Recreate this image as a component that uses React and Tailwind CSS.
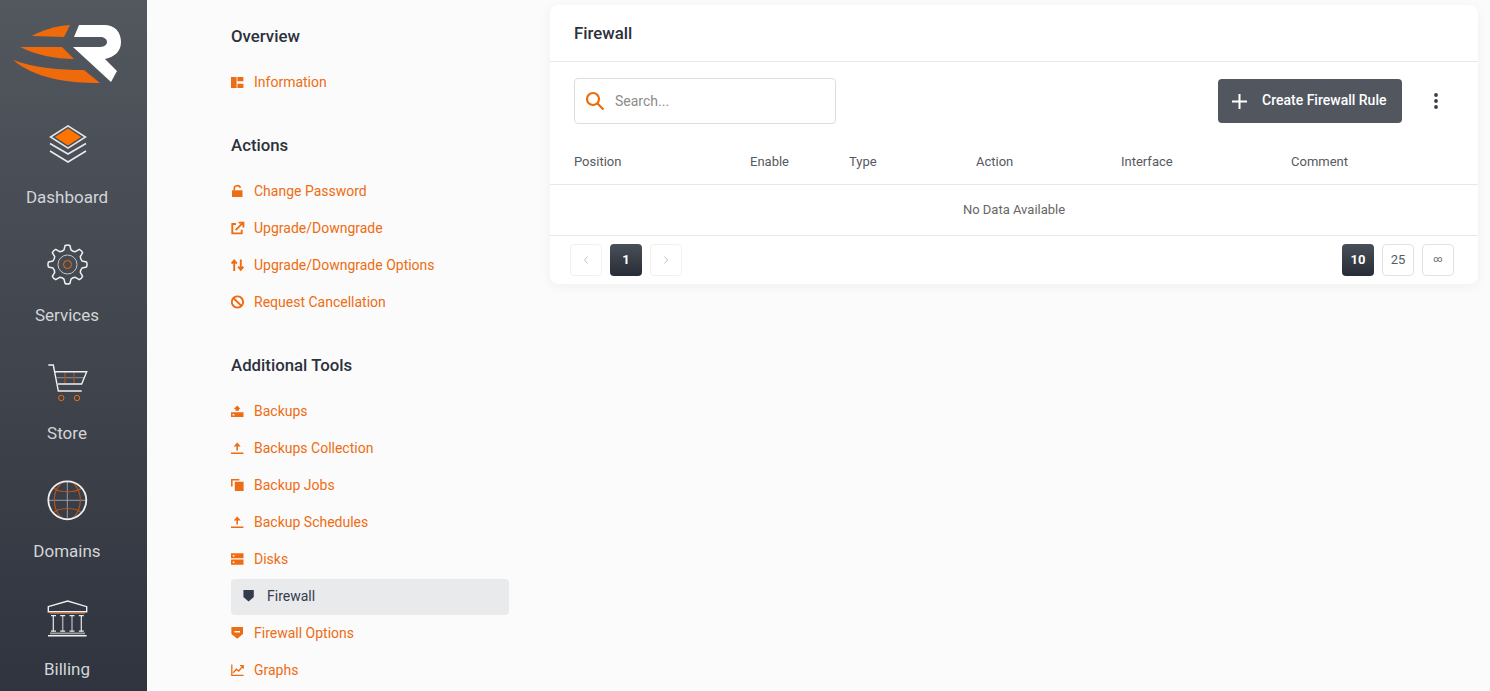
const gearPath = (() => {
  // Eight-toothed cog outline around the origin of its own viewBox.
  const cx = 25.5, cy = 24.5, teeth = 8, out = 19.2, inn = 15;
  let d = "";
  for (let i = 0; i < teeth; i++) {
    const a = (i / teeth) * Math.PI * 2 - Math.PI / 2;
    const step = (Math.PI * 2) / teeth;
    const pt = (r, t) => `${(cx + r * Math.cos(t)).toFixed(2)} ${(cy + r * Math.sin(t)).toFixed(2)}`;
    d += `${i === 0 ? "M" : "L"}${pt(inn, a - step * 0.3)} L${pt(out, a - step * 0.16)} Q${pt(out + 0.8, a)} ${pt(out, a + step * 0.16)} L${pt(inn, a + step * 0.3)} Q${pt(inn - 1, a + step * 0.5)} `;
    const n = a + step;
    d += `${pt(inn, n - step * 0.3)} `;
  }
  return d + "Z";
})();

function Logo() {
  return (
    <svg viewBox="0 0 147 100" className="w-[147px] h-[100px] block">
      <path fill="#ee6a0a" d="M32 36C42 30 56 26 70 25L64 37Z" />
      <path fill="#ee6a0a" d="M20 47H62L74 59C55 59 36 55 20 47Z" />
      <path fill="#ee6a0a" d="M13 60C35 68 60 70 84 70L100 83C65 83 35 78 13 60Z" />
      <path fill="#ffffff" d="M79 25H104C115 25 121 32 121 42C121 51 115 57 105 59L117 71L111 82L73 47H100C105 47 107 44 107 42C107 39 104 37 100 37H74Z" />
    </svg>
  );
}

const sideIcons = {
  dashboard: (
    <>
      <path d="M26 3.8L43.5 15L26 26.2L8.5 15Z" fill="none" stroke="#e8e9ea" strokeWidth="1.5" />
      <path d="M26 6.6L39 15L26 23.4L13 15Z" fill="#ff7300" />
      <path d="M8 21.5L26 32L44 21.5M8 29L26 40L44 29" fill="none" stroke="#e8e9ea" strokeWidth="1.6" />
    </>
  ),
  services: (
    <>
      <path d={gearPath} fill="none" stroke="#f0f0f0" strokeWidth="1.5" strokeLinejoin="round" />
      <circle cx="25.5" cy="24.5" r="9.5" fill="none" stroke="#c4c6ca" strokeWidth="1" />
      <circle cx="25.5" cy="24.5" r="4" fill="none" stroke="#ee6a0a" strokeWidth="1" />
    </>
  ),
  store: (
    <>
      <path d="M14.7 19.7H42" stroke="#8e9096" strokeWidth="1" fill="none" />
      <path d="M23 14V26M32 14V26" stroke="#a5562a" strokeWidth="1.2" fill="none" />
      <path d="M6.3 7H11.3L16.3 33H39.7M13 13.7H44.7L39.7 26H16" stroke="#f0f0f0" strokeWidth="1.4" fill="none" />
      <circle cx="19.3" cy="40" r="2.7" fill="none" stroke="#ee6a0a" strokeWidth="1" />
      <circle cx="35" cy="40" r="2.7" fill="none" stroke="#ee6a0a" strokeWidth="1" />
    </>
  ),
  domains: (
    <>
      <path d="M25.3 5.5V43M6 24.3H44.5" stroke="#9a9ca2" strokeWidth="1" fill="none" />
      <ellipse cx="25.3" cy="24.3" rx="13" ry="19" fill="none" stroke="#b8541a" strokeWidth="1.1" />
      <path d="M11 12C18 17 33 17 40 12M11 37C18 31 33 31 40 37" fill="none" stroke="#b8541a" strokeWidth="1.1" />
      <circle cx="25.3" cy="24.3" r="19" fill="none" stroke="#f0f0f0" strokeWidth="1.8" />
    </>
  ),
  billing: (
    <>
      <path d="M6.3 12.7L25.7 7L44.7 12.7V17.7H6.3Z" fill="none" stroke="#f0f0f0" strokeWidth="1.4" />
      <path d="M8 19.5H43" stroke="#c05f1c" strokeWidth="1" />
      <path d="M11.3 21V37.5M39.3 21V37.5" stroke="#e8e9ea" strokeWidth="1.2" />
      <path d="M20.7 21V37.5M30 21V37.5" stroke="#a4a6aa" strokeWidth="1.5" />
      <path d="M9 21.7H14M18.2 21.7H23.2M27.5 21.7H32.5M36.8 21.7H41.8M9 37.2H14M18.2 37.2H23.2M27.5 37.2H32.5M36.8 37.2H41.8" stroke="#e8e9ea" strokeWidth="1.3" />
      <path d="M8 39.4H43" stroke="#9fa1a5" strokeWidth="1.6" />
      <path d="M6 41.8H44.6" stroke="#f0f0f0" strokeWidth="1.4" />
    </>
  ),
};

const sideItems = [
  ["Dashboard", "dashboard"],
  ["Services", "services"],
  ["Store", "store"],
  ["Domains", "domains"],
  ["Billing", "billing"],
];

function SideItem({ label, icon }) {
  return (
    <div className="h-[118px] shrink-0 pt-[22px] pr-[13px] flex flex-col items-center">
      <svg viewBox="0 0 50 50" className="w-[50px] h-[50px] block">
        {sideIcons[icon]}
      </svg>
      <span className="mt-[15px] h-[20px] leading-[20px] text-[17px] text-[#d3d5d8]">{label}</span>
    </div>
  );
}

const menuIcons = {
  info: (
    <path d="M0 2H5.6V13H0ZM6.4 2H12.4V6.3H6.4ZM6.4 8.7H12.4V13H6.4Z" />
  ),
  lock: (
    <>
      <path d="M1 6.3H11.5V13H1Z" />
      <path d="M3.3 6.5V4.3C3.3 1 8.8 .8 9.2 3.8" fill="none" stroke="currentColor" strokeWidth="1.6" />
    </>
  ),
  external: (
    <path d="M5 3H1.3V12.4H10.7V8.8M4.6 9.2L11.6 2.2M7.6 1.6H12.4V6.4" fill="none" stroke="currentColor" strokeWidth="1.9" />
  ),
  swap: (
    <path d="M3.2 13V3.4M.6 5.6L3.2 2.4L5.8 5.6M9.8 1.5V11M7.2 8.6L9.8 11.8L12.4 8.6" fill="none" stroke="currentColor" strokeWidth="1.9" />
  ),
  block: (
    <path d="M6.5 1.4A5.6 5.6 0 1 1 6.4 1.4ZM2.6 3.2L10.4 10.9" fill="none" stroke="currentColor" strokeWidth="1.9" />
  ),
  backup: (
    <path fillRule="evenodd" d="M0 8.2H12.5V13H0ZM1.6 10H3.4V11.4H1.6ZM4.4 6.8V5H2.8L6.2 1.4L9.6 5H8V6.8Z" />
  ),
  upload: (
    <path d="M0 11.4H12.4V13H0ZM5.4 9.4V5.4H2.6L6.2 1.4L9.8 5.4H7V9.4Z" />
  ),
  jobs: (
    <path d="M3.8 3.8H12.6V13H3.8ZM0 1H8.4V2.6H1.6V8.6H0Z" />
  ),
  disks: (
    <path fillRule="evenodd" d="M0 1.2H12.5V6.2H0ZM0 7.6H12.5V12.8H0ZM1.8 3H3.4V4.5H1.8ZM1.8 9.4H3.4V10.9H1.8Z" />
  ),
  shield: <path d="M.4 1H10.8V8L5.6 12.5L.4 8Z" />,
  shieldDash: (
    <path fillRule="evenodd" d="M.4 1H12V8L6.2 12.8L.4 8ZM3.4 5V6.6H9V5Z" />
  ),
  graph: (
    <path d="M.8 1.4V12.4H12.6M2.2 9.8L5.4 6.2L7.8 8L11.8 3.2M9 2.6H12.2V5.8" fill="none" stroke="currentColor" strokeWidth="1.3" />
  ),
};

function MenuIcon({ name }) {
  return (
    <svg viewBox="0 0 14 14" className="w-[14px] h-[14px] shrink-0 block" fill="currentColor">
      {menuIcons[name]}
    </svg>
  );
}

function MenuRow({ icon, label, active }) {
  if (active) {
    return (
      <div className="h-[36px] mt-[2px] pb-[2px] flex items-center gap-[10px] px-3 rounded bg-[#e9eaeb] text-[#333b4f] text-[14px]">
        <MenuIcon name={icon} />
        <span>{label}</span>
      </div>
    );
  }
  return (
    <div className="h-[36px] mb-px flex items-center gap-[9px] text-[#ee6c12] text-[14px]">
      <MenuIcon name={icon} />
      <span>{label}</span>
    </div>
  );
}

function MenuGroup({ title, items, className }) {
  return (
    <section className={className}>
      <h2 className="h-[26px] leading-[24px] text-[16.8px] font-medium text-[#2c313b] mb-[14px]">{title}</h2>
      {items.map(([icon, label, active]) => (
        <MenuRow key={label} icon={icon} label={label} active={active} />
      ))}
    </section>
  );
}

function PageButton({ children, kind }) {
  const styles = {
    active: "bg-gradient-to-b from-[#4a5059] to-[#272c36] text-white font-bold",
    plain: "border border-[#e2e2e2] text-[#555b64] bg-white",
    muted: "border border-[#f1f1f1] text-[#c4c4c4] bg-white",
  };
  return (
    <div className={`w-[32px] h-[32px] rounded flex items-center justify-center text-[13px] ${styles[kind]}`}>
      {children}
    </div>
  );
}

function Chevron({ d }) {
  return (
    <svg viewBox="0 0 6 10" className="w-[6px] h-[10px]" fill="none" stroke="currentColor" strokeWidth="1">
      <path d={d} />
    </svg>
  );
}

const columns = ["Position", "Enable", "Type", "Action", "Interface", "Comment"];

export default function App() {
  return (
    <div className="h-screen overflow-hidden flex bg-[#fbfbfb] font-['Roboto',sans-serif]">
      <aside className="w-[147px] shrink-0 h-full overflow-hidden bg-gradient-to-b from-[#53585f] to-[#2f343e]">
        <Logo />
        {sideItems.map(([label, icon]) => (
          <SideItem key={label} label={label} icon={icon} />
        ))}
      </aside>

      <nav className="w-[278px] shrink-0 ml-[84px] pt-[24px]">
        <MenuGroup title="Overview" className="mb-[33px]" items={[["info", "Information"]]} />
        <MenuGroup
          title="Actions"
          className="mb-[33px]"
          items={[
            ["lock", "Change Password"],
            ["external", "Upgrade/Downgrade"],
            ["swap", "Upgrade/Downgrade Options"],
            ["block", "Request Cancellation"],
          ]}
        />
        <MenuGroup
          title="Additional Tools"
          items={[
            ["backup", "Backups"],
            ["upload", "Backups Collection"],
            ["jobs", "Backup Jobs"],
            ["upload", "Backup Schedules"],
            ["disks", "Disks"],
            ["shield", "Firewall", true],
            ["shieldDash", "Firewall Options"],
            ["graph", "Graphs"],
          ]}
        />
      </nav>

      <main className="flex-1 pl-[41px] pr-[12px] pt-[5px]">
        <div className="bg-white rounded-lg shadow-[0_2px_12px_rgba(0,0,0,0.05)]">
          <div className="h-[57px] border-b border-[#e8e8e8] px-6 pt-px flex items-center">
            <h1 className="text-[16.8px] font-medium text-[#2c313b]">Firewall</h1>
          </div>

          <div className="pl-6 pr-[40px] pt-4 flex items-center">
            <div className="w-[262px] h-[46px] border border-[#dedede] rounded flex items-center pl-[10px] gap-[10px]">
              <svg viewBox="0 0 20 20" className="w-[20px] h-[20px] text-[#ee6a0a]" fill="none" stroke="currentColor" strokeWidth="2.2">
                <circle cx="8" cy="8" r="6" />
                <path d="M12.5 12.5L18.5 18.5" />
              </svg>
              <span className="text-[14px] text-[#8c8c8c]">Search...</span>
            </div>
            <div className="ml-auto w-[184px] h-[44px] rounded bg-[#52575f] text-white flex items-center pl-[14px] gap-[15px]">
              <svg viewBox="0 0 15 15" className="w-[15px] h-[15px]" fill="none" stroke="currentColor" strokeWidth="2">
                <path d="M7.5 0V15M0 7.5H15" />
              </svg>
              <span className="text-[14px] font-medium whitespace-nowrap -translate-y-px">Create Firewall Rule</span>
            </div>
            <svg viewBox="0 0 4 16" className="ml-[32px] w-[4px] h-[16px] fill-[#3a3f47]">
              <circle cx="2" cy="2" r="1.9" />
              <circle cx="2" cy="8" r="1.9" />
              <circle cx="2" cy="14" r="1.9" />
            </svg>
          </div>

          <div className="mt-[15px] h-[46px] pl-6 border-b border-[#e8e8e8] grid grid-cols-[176px_99px_127px_145px_170px_1fr] items-center text-[13px] text-[#555a62]">
            {columns.map((c) => (
              <span key={c}>{c}</span>
            ))}
          </div>
          <div className="h-[51px] border-b border-[#e8e8e8] flex items-center justify-center text-[13px] text-[#666]">
            No Data Available
          </div>

          <div className="h-[48px] pl-5 pr-6 flex items-center">
            <div className="flex gap-2">
              <PageButton kind="muted"><Chevron d="M4.5 1.5L1.5 5L4.5 8.5" /></PageButton>
              <PageButton kind="active">1</PageButton>
              <PageButton kind="muted"><Chevron d="M1.5 1.5L4.5 5L1.5 8.5" /></PageButton>
            </div>
            <div className="flex gap-2 ml-auto">
              <PageButton kind="active">10</PageButton>
              <PageButton kind="plain">25</PageButton>
              <PageButton kind="plain"><span className="text-[9px]">∞</span></PageButton>
            </div>
          </div>
        </div>
      </main>
    </div>
  );
}
